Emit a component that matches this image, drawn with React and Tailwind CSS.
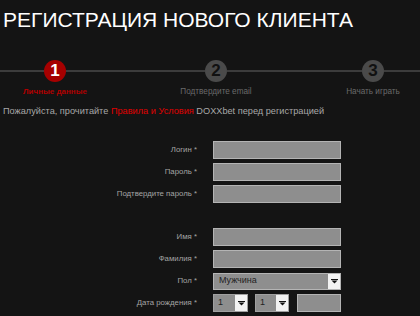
import React from "react";

const F = { fontFamily: '"Liberation Sans", Arial, sans-serif' };

function Field({ label, children }) {
  return (
    <div className="flex items-center h-[18px]">
      <div className="w-[198px] text-right text-[7.8px] text-[#a4a4a4] whitespace-nowrap pr-[1px]">{label}</div>
      <div className="ml-[15px] flex items-center">{children}</div>
    </div>
  );
}

function Input() {
  return <div className="h-[18px] w-[128px] bg-[#8e8e8e] border border-[#b4b4b4]" />;
}

function Arrow() {
  return (
    <div className="h-full w-[12px] bg-[#f2f2f2] flex items-center justify-center">
      <svg width="7" height="5" viewBox="0 0 7 5">
        <rect x="0" y="0" width="7" height="1" fill="#111" />
        <polygon points="0.5,1.5 6.5,1.5 3.5,4.5" fill="#111" />
      </svg>
    </div>
  );
}

function Step({ n, label, active, w }) {
  return (
    <div className="flex flex-col items-center" style={{ width: w }}>
      <div className="flex items-center w-full">
        <div className="flex-1 h-[2px] bg-[#3c3c3c]" />
        <div
          className={
            "w-[22px] h-[22px] rounded-full flex items-center justify-center text-[17px] font-bold " +
            (active ? "bg-[#a60000] text-white" : "bg-[#4a4a4a] text-[#111]")
          }
        >
          {n}
        </div>
        <div className="flex-1 h-[2px] bg-[#3c3c3c]" />
      </div>
      <div
        className={
          "mt-[4px] whitespace-nowrap " +
          (active ? "text-[8px] text-[#b00000] font-bold" : "text-[8.2px] text-[#6a6a6a]")
        }
      >
        {label}
      </div>
    </div>
  );
}

export default function App() {
  return (
    <div className="w-[420px] h-[316px] bg-[#141414] overflow-hidden" style={F}>
      <div className="pt-[6px] pl-[3px] text-[21px] leading-[28px] text-white whitespace-nowrap">
        РЕГИСТРАЦИЯ НОВОГО КЛИЕНТА
      </div>
      <div className="mt-[26px] flex items-start w-[424px]">
        <div className="w-[110px]"><Step n="1" label="Личные данные" active w={110} /></div>
        <div className="w-[212px]"><Step n="2" label="Подтвердите email" w={212} /></div>
        <div className="w-[102px]"><Step n="3" label="Начать играть" w={102} /></div>
      </div>
      <div className="mt-[7px] pl-[3px] text-[9.2px] text-[#a8a8a8] whitespace-nowrap">
        Пожалуйста, прочитайте <span className="text-[#e00000]">Правила и Условия</span> DOXXbet перед регистрацией
      </div>
      <div className="mt-[22px] flex flex-col gap-[4px]">
        <Field label="Логин *"><Input /></Field>
        <Field label="Пароль *"><Input /></Field>
        <Field label="Подтвердите пароль *"><Input /></Field>
        <div className="h-[17px]" />
        <Field label="Имя *"><Input /></Field>
        <Field label="Фамилия *"><Input /></Field>
        <Field label="Пол *">
          <div className="h-[17px] w-[128px] bg-[#8e8e8e] border border-[#b4b4b4] flex items-center justify-between">
            <span className="pl-[5px] text-[9px] text-[#222]">Мужчина</span>
            <Arrow />
          </div>
        </Field>
        <Field label="Дата рождения *">
          <div className="flex items-center">
            <div className="h-[18px] w-[35px] bg-[#8e8e8e] border border-[#a0a0a0] flex items-center justify-between">
              <span className="pl-[4px] text-[9px] text-[#222]">1</span>
              <Arrow />
            </div>
            <div className="ml-[7px] h-[18px] w-[34px] bg-[#8e8e8e] border border-[#a0a0a0] flex items-center justify-between">
              <span className="pl-[4px] text-[9px] text-[#222]">1</span>
              <Arrow />
            </div>
            <div className="ml-[8px] h-[18px] w-[44px] bg-[#8e8e8e] border border-[#b4b4b4]" />
          </div>
        </Field>
      </div>
    </div>
  );
}
